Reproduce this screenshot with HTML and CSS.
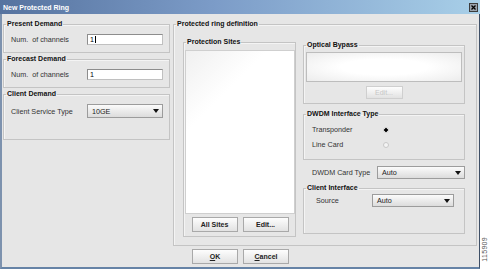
FILE: index.html
```html
<!DOCTYPE html>
<html lang="en">
<head>
    <meta charset="UTF-8">
    <title>New Protected Ring</title>
    <link rel="stylesheet" href="styles.css">
</head>
<body>
<div class="window">
    <div class="titlebar">
        <span>New Protected Ring</span>
        <span class="close">
            <svg width="7" height="7" viewBox="0 0 7 7"><path d="M1.5 1.5 L5.5 5.5 M5.5 1.5 L1.5 5.5" stroke="#000" stroke-width="1.3"/></svg>
        </span>
    </div>
    <div class="content">
        <div class="left-col">
            <fieldset class="group">
                <legend>Present Demand</legend>
                <div class="demand row">
                    <span>Num.&nbsp; of channels</span>
                    <div class="input">1<span class="caret"></span></div>
                </div>
            </fieldset>
            <fieldset class="group">
                <legend>Forecast Demand</legend>
                <div class="demand row">
                    <span>Num.&nbsp; of channels</span>
                    <div class="input">1</div>
                </div>
            </fieldset>
            <fieldset class="group">
                <legend>Client Demand</legend>
                <div class="demand client-demand row">
                    <span>Client Service Type</span>
                    <div class="combo combo-service">10GE<i class="arrow"></i></div>
                </div>
            </fieldset>
        </div>

        <fieldset class="group ring">
            <legend>Protected ring definition</legend>
            <div class="ring-body">
                <fieldset class="group sites">
                    <legend>Protection Sites</legend>
                    <div class="sites-body">
                        <div class="list"></div>
                        <div class="btn-row">
                            <button class="btn">All Sites</button>
                            <button class="btn">Edit...</button>
                        </div>
                    </div>
                </fieldset>

                <div class="right-col">
                    <fieldset class="group">
                        <legend>Optical Bypass</legend>
                        <div class="bypass">
                            <div class="bypass-box"></div>
                            <div class="center">
                                <button class="btn small" disabled>Edit...</button>
                            </div>
                        </div>
                    </fieldset>
                    <fieldset class="group iface">
                        <legend>DWDM Interface Type</legend>
                        <div class="iface-body">
                            <div class="radio-row">
                                <span>Transponder</span>
                                <span class="radio on"></span>
                            </div>
                            <div class="radio-row">
                                <span>Line Card</span>
                                <span class="radio"></span>
                            </div>
                        </div>
                    </fieldset>
                    <div class="card-row">
                        <span>DWDM Card Type</span>
                        <div class="combo combo-card">Auto<i class="arrow"></i></div>
                    </div>
                    <fieldset class="group client-if">
                        <legend>Client Interface</legend>
                        <div class="source-row">
                            <span>Source</span>
                            <div class="combo combo-source">Auto<i class="arrow"></i></div>
                        </div>
                    </fieldset>
                </div>
            </div>
        </fieldset>
    </div>
    <div class="dialog-buttons">
        <button class="btn"><u>O</u>K</button>
        <button class="btn"><u>C</u>ancel</button>
    </div>
</div>
<div class="fig-strip">
    <span class="fig-no">115909</span>
</div>
</body>
</html>
```

FILE: styles.css
```css
body {
    margin: 0;
    width: 489px;
    height: 269px;
    background: #fff;
    display: flex;
    font-family: 'Liberation Sans', Arial, sans-serif;
    font-size: 7.2px;
    color: #222;
    overflow: hidden;
}
.window {
    box-sizing: border-box;
    width: 480px;
    height: 269px;
    background: #e6e6e6;
    border-left: 2px solid #7d92ae;
    border-right: 1px solid #3e4f66;
    border-bottom: 2px solid #6683a6;
    display: flex;
    flex-direction: column;
}
.titlebar {
    height: 14px;
    margin-left: -2px;
    margin-right: -1px;
    padding: 0 2px 0 3px;
    background: linear-gradient(to right, #56739f, #7c9cc8 45%, #a8cfe8);
    color: #fff;
    font-weight: bold;
    font-size: 7px;
    display: flex;
    align-items: center;
    justify-content: space-between;
}
.close {
    width: 9px;
    height: 9px;
    background: #9aa3ad;
    border: 1px solid #3c3c3c;
    box-sizing: border-box;
    display: flex;
    align-items: center;
    justify-content: center;
}
.close svg {
    width: 7px;
    height: 7px;
}
.content {
    display: flex;
    align-items: flex-start;
    padding: 5px 0 0 1px;
    gap: 3px;
}
.left-col {
    width: 167px;
    display: flex;
    flex-direction: column;
    gap: 1px;
}

/* group boxes: padding lives on the inner body so legends stay at the left edge */
.group {
    margin: 0;
    min-width: 0;
    padding: 0;
    border: 1px solid #c4c4c4;
    box-shadow: inset 1px 1px 0 #f4f4f4;
}
.group legend {
    padding: 0 1px;
    margin-left: 2px;
    font-weight: bold;
    font-size: 7px;
    line-height: 10px;
    color: #111;
}
.demand {
    padding: 5px 6px 7px 7px;
}
.client-demand {
    padding-bottom: 21px;
}
.row {
    display: flex;
    align-items: center;
    justify-content: space-between;
    color: #333;
}
.input {
    box-sizing: border-box;
    width: 76px;
    height: 11px;
    background: #fff;
    border: 1px solid #8d8d8d;
    border-right-color: #c0c0c0;
    border-bottom-color: #c0c0c0;
    padding-left: 2px;
    line-height: 9px;
    color: #000;
    display: flex;
    align-items: center;
}
.caret {
    width: 1px;
    height: 7px;
    background: #000;
    margin-left: 1px;
}
.combo {
    box-sizing: border-box;
    height: 14px;
    border: 1px solid #9c9c9c;
    background: linear-gradient(#fbfbfb, #dcdcdc);
    padding: 0 3px 0 4px;
    display: flex;
    align-items: center;
    justify-content: space-between;
    color: #222;
}
.combo-service {
    width: 76px;
}
.arrow {
    width: 0;
    height: 0;
    border-left: 3px solid transparent;
    border-right: 3px solid transparent;
    border-top: 4px solid #111;
}
.ring {
    width: 304px;
    box-sizing: border-box;
}
.ring-body {
    display: flex;
    align-items: flex-start;
    gap: 7px;
    padding: 8px 11px 8px 9px;
}
.sites {
    width: 113px;
    box-sizing: border-box;
}
.sites-body {
    padding: 3px 0 4px 1px;
}
.list {
    height: 164px;
    background: linear-gradient(135deg, #f0f0f0, #fff 30%);
    border: 1px solid #cfcfcf;
    box-sizing: border-box;
}
.btn-row {
    display: flex;
    justify-content: center;
    gap: 5px;
    margin-top: 3px;
}
.btn {
    box-sizing: border-box;
    width: 46px;
    height: 15px;
    padding: 0;
    border: 1px solid #a9a9a9;
    background: linear-gradient(#fdfdfd, #e2e2e2);
    font-family: inherit;
    font-size: 7px;
    font-weight: bold;
    color: #222;
}
.btn u {
    text-decoration-thickness: 1px;
}
.btn.small {
    width: 37px;
    height: 13px;
    color: #c6c6c6;
    border-color: #cfcfcf;
    font-weight: normal;
}
.right-col {
    width: 162px;
    margin-top: 3px;
    display: flex;
    flex-direction: column;
}
.bypass {
    padding: 2px 2px 4px 2px;
}
.bypass-box {
    height: 30px;
    background: radial-gradient(ellipse at center, #fff 40%, #ececec);
    border: 1px solid #bdbdbd;
    box-sizing: border-box;
}
.center {
    display: flex;
    justify-content: center;
    margin-top: 4px;
}
.iface {
    margin-top: 5px;
}
.iface-body {
    padding: 3px 0 7px 8px;
}
.radio-row {
    height: 15px;
    display: grid;
    grid-template-columns: 71px auto;
    align-items: center;
    color: #333;
}
.radio {
    width: 6px;
    height: 6px;
    border-radius: 50%;
    border: 1px solid #c8c8c8;
    box-sizing: border-box;
    background: #f4f4f4;
}
.radio.on {
    border-color: #d0d0d0;
    background: radial-gradient(circle, #000 1.6px, #eee 2px);
}
.card-row {
    margin-top: 6px;
    padding-left: 9px;
    display: flex;
    align-items: center;
    justify-content: space-between;
    color: #333;
}
.combo-card,
.combo-source {
    height: 13px;
}
.combo-card {
    width: 88px;
}
.client-if {
    margin-top: 4px;
}
.source-row {
    padding: 1px 10px 26px 12px;
    display: flex;
    align-items: center;
    justify-content: space-between;
    color: #333;
}
.combo-source {
    width: 82px;
}
.dialog-buttons {
    display: flex;
    justify-content: center;
    gap: 5px;
    margin-top: 3px;
}
.fig-strip {
    flex: 1;
    display: flex;
    align-items: flex-end;
    justify-content: center;
    padding-bottom: 7px;
}
.fig-no {
    writing-mode: vertical-rl;
    transform: rotate(180deg);
    font-size: 7px;
    color: #555;
    letter-spacing: 0.3px;
}
```
